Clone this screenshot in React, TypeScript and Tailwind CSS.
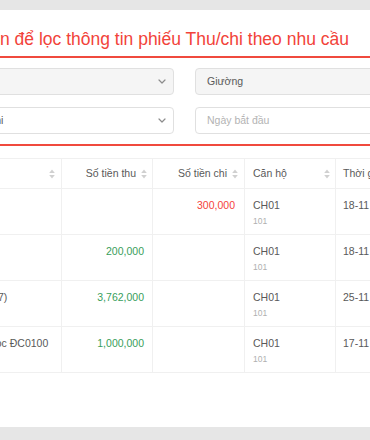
import React from 'react';

const Chevron = () => (
  <svg width="8" height="5" viewBox="0 0 8 5" fill="none" stroke="#8c8c8c" strokeWidth="1.2" strokeLinecap="round" strokeLinejoin="round">
    <path d="M1 1l3 3 3-3" />
  </svg>
);

const SortIcon = () => (
  <svg width="6" height="10" viewBox="0 0 6 10" fill="#d0d0d0">
    <path d="M3 0.5L5.8 4H0.2z" />
    <path d="M3 9.5L0.2 6h5.6z" />
  </svg>
);

const rows = [
  { title: 'Chi phí', thu: '', chi: '300,000', date: '18-11' },
  { title: 'Thu tiền', thu: '200,000', chi: '', date: '18-11' },
  { title: 'Thu tiền phòng (HĐ00007)', thu: '3,762,000', chi: '', date: '25-11' },
  { title: 'Tiền cọc hợp đồng đặt cọc ĐC0100', thu: '1,000,000', chi: '', date: '17-11' },
];

const App = () => {
  return (
    <div className="w-[370px] h-[440px] overflow-hidden bg-[#e6e6e6] pt-[10px] font-['Liberation_Sans',Arial,sans-serif]">
      <div className="h-[417px] bg-white overflow-hidden">
        <div className="h-[46px] flex items-end pb-[5px] whitespace-nowrap text-[17.5px] leading-[24px] text-[#f2433a]">
          n để lọc thông tin phiếu Thu/chi theo nhu cầu
        </div>

        <div className="border-y-2 border-[#f04a3e] py-[10px] flex flex-col gap-[12px]">
          <div className="flex gap-[21px] -ml-[60px] text-[10.5px]">
            <div className="w-[234px] h-[27px] shrink-0 rounded border border-[#e0e0e0] bg-[#f5f5f5] flex items-center justify-end pr-[7px]">
              <Chevron />
            </div>
            <div className="w-[220px] h-[27px] shrink-0 rounded border border-[#e0e0e0] bg-[#f5f5f5] flex items-center pl-[11px] text-[#595959]">
              Giường
            </div>
          </div>
          <div className="flex gap-[21px] -ml-[60px] text-[10.5px]">
            <div className="w-[234px] h-[27px] shrink-0 rounded border border-[#e0e0e0] bg-white flex items-center justify-between pl-[28px] pr-[7px] text-[#595959]">
              <span>Thu/chi</span>
              <Chevron />
            </div>
            <div className="w-[220px] h-[27px] shrink-0 rounded border border-[#e0e0e0] bg-white flex items-center pl-[11px] text-[#b3b3b3]">
              Ngày bắt đầu
            </div>
          </div>
        </div>

        <div className="mt-[12px] -ml-[240px] w-[700px] border-t border-[#f0f0f0] text-[10.5px] text-[#595959]">
          <div className="flex h-[30px] border-b border-[#f0f0f0]">
            <div className="w-[302px] shrink-0 border-r border-[#f0f0f0] flex items-center justify-end pr-[6px]">
              <SortIcon />
            </div>
            <div className="w-[91px] shrink-0 border-r border-[#f0f0f0] flex items-center justify-end gap-[5px] pr-[5px]">
              <span>Số tiền thu</span>
              <SortIcon />
            </div>
            <div className="w-[92px] shrink-0 border-r border-[#f0f0f0] flex items-center justify-end gap-[5px] pr-[6px]">
              <span>Số tiền chi</span>
              <SortIcon />
            </div>
            <div className="w-[91px] shrink-0 border-r border-[#f0f0f0] flex items-center justify-between pl-[8px] pr-[5px]">
              <span>Căn hộ</span>
              <SortIcon />
            </div>
            <div className="flex-1 flex items-center pl-[7px]">Thời gian</div>
          </div>

          {rows.map((r, i) => (
            <div key={i} className="flex h-[46px] border-b border-[#f0f0f0]">
              <div className="w-[302px] shrink-0 border-r border-[#f0f0f0] pl-[123px] pt-[8px] leading-[16px] whitespace-nowrap overflow-hidden">
                {r.title}
              </div>
              <div className="w-[91px] shrink-0 border-r border-[#f0f0f0] pr-[8px] pt-[8px] leading-[16px] text-right text-[#389e5b]">
                {r.thu}
              </div>
              <div className="w-[92px] shrink-0 border-r border-[#f0f0f0] pr-[9px] pt-[8px] leading-[16px] text-right text-[#f5433b]">
                {r.chi}
              </div>
              <div className="w-[91px] shrink-0 border-r border-[#f0f0f0] pl-[8px] pt-[8px] leading-[16px]">
                <div>CH01</div>
                <div className="text-[8.5px] leading-[16px] text-[#b0b0b0]">101</div>
              </div>
              <div className="flex-1 pl-[7px] pt-[8px] leading-[16px]">{r.date}</div>
            </div>
          ))}
        </div>
      </div>
    </div>
  );
};

export default App;
